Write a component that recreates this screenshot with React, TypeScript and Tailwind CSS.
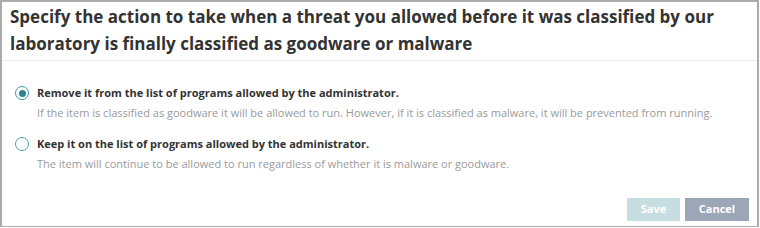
import React, { useState } from 'react';

const options = [
  {
    id: 'remove',
    title: 'Remove it from the list of programs allowed by the administrator.',
    text: 'If the item is classified as goodware it will be allowed to run. However, if it is classified as malware, it will be prevented from running.',
  },
  {
    id: 'keep',
    title: 'Keep it on the list of programs allowed by the administrator.',
    text: 'The item will continue to be allowed to run regardless of whether it is malware or goodware.',
  },
];

export default function App() {
  const [selected, setSelected] = useState('remove');

  return (
    <div
      className="w-[760px] h-[228px] bg-white"
      style={{ fontFamily: '"Open Sans", "Liberation Sans", sans-serif' }}
    >
      <div className="w-[759px] h-[227px] border-2 border-b border-r-[2px] border-[#ababab] flex flex-col">
        <div className="px-[8px] pt-[1px] pb-[3px] border-b border-[#ececec]">
          <h1 className="text-[17px] leading-[27px] font-bold text-[#333]">
            Specify the action to take when a threat you allowed before it was classified by our
            laboratory is finally classified as goodware or malware
          </h1>
        </div>

        <div className="flex flex-col gap-[14px] pt-[24px] pl-[13px]">
          {options.map((o) => (
            <label key={o.id} className="flex gap-[8px] cursor-pointer" onClick={() => setSelected(o.id)}>
              <span
                className={`mt-[1px] w-[14px] h-[14px] rounded-full border-[1.5px] flex items-center justify-center shrink-0 ${
                  selected === o.id ? 'border-[#3d97a5]' : 'border-[#4f9fae]'
                }`}
              >
                {selected === o.id && <span className="w-[7px] h-[7px] rounded-full bg-[#2d8392]" />}
              </span>
              <span className="flex flex-col">
                <span className="text-[11px] leading-[16px] font-bold text-[#333]">{o.title}</span>
                <span className="mt-[3px] text-[11px] leading-[18px] text-[#9a9a9a]">{o.text}</span>
              </span>
            </label>
          ))}
        </div>

        <div className="mt-auto flex justify-end gap-[5px] pr-[8px] pb-[5px]">
          <button className="w-[53px] h-[23px] bg-[#c6dee2] text-white text-[11px] font-bold">Save</button>
          <button className="w-[64px] h-[23px] bg-[#9ba6b6] text-white text-[11px] font-bold">Cancel</button>
        </div>
      </div>
    </div>
  );
}
